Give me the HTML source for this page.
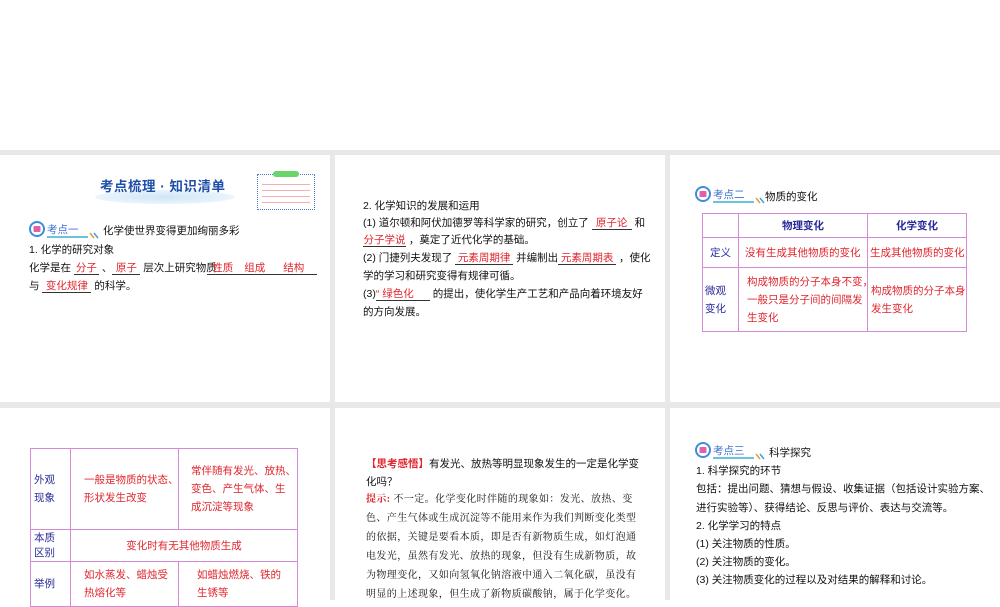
<!DOCTYPE html>
<html><head><meta charset="utf-8"><style>
*{margin:0;padding:0;box-sizing:border-box}
body{width:1000px;height:600px;background:#fff;position:relative;overflow:hidden;font-family:"Liberation Sans","Noto Sans CJK SC",sans-serif;font-size:10.5px;color:#111}
.g{position:absolute;background:#e8e8e8}
.t{position:absolute;white-space:nowrap;line-height:14px}
.r{color:#e0262e}
.b{color:#2a2a9a}
.bl{display:inline-block;border-bottom:1px solid #333;text-align:center;color:#e0262e;line-height:12px}
.icon{position:absolute;width:76px;height:20px}
table{position:absolute;border-collapse:collapse;font-size:10.5px}
td{border:1px solid #d58ad8;line-height:18px;white-space:nowrap}
.serif{font-family:"Liberation Serif","Noto Serif CJK SC",serif}
</style></head><body>
<div class="g" style="left:0;top:150px;width:1000px;height:5px"></div>
<div class="g" style="left:0;top:402px;width:1000px;height:6px"></div>
<div class="g" style="left:330px;top:150px;width:5px;height:450px"></div>
<div class="g" style="left:665px;top:150px;width:5px;height:450px"></div>

<!-- slide 1 -->
<div style="position:absolute;left:95px;top:190px;width:140px;height:14px;background:radial-gradient(ellipse at center,#cfe6f7 0%,#e6f2fb 60%,rgba(255,255,255,0) 100%);border-radius:50%"></div>
<div class="t" style="left:100px;top:179px;font-size:13.5px;font-weight:bold;color:#1f4fa8;line-height:16px;letter-spacing:0.5px">考点梳理 · 知识清单</div>
<div style="position:absolute;left:257px;top:174px;width:58px;height:36px;border:1px dotted #4a7ac8"></div>
<div style="position:absolute;left:273px;top:171px;width:26px;height:6px;background:#6bd46b;border-radius:3px"></div>
<div style="position:absolute;left:262px;top:181px;width:48px;height:24px;background:repeating-linear-gradient(#fff 0 3px,#f4b0b0 3px 4px,#fff 4px 6px)"></div>

<svg class="icon" style="left:28px;top:220px" viewBox="0 0 76 20"><circle cx="9" cy="9" r="7" fill="#fff" stroke="#3a8fd8" stroke-width="2"/><rect x="5.5" y="6" width="7" height="6" rx="1" fill="#e060b0"/><text x="19" y="13" font-size="10.5" fill="#3a6fd0" font-family="Noto Sans CJK SC">考点一</text><line x1="19" y1="17" x2="60" y2="17" stroke="#3ab0d0" stroke-width="1.5"/><line x1="62" y1="13" x2="66" y2="18" stroke="#e0a030" stroke-width="1.5"/><line x1="66" y1="13" x2="70" y2="18" stroke="#40a0e0" stroke-width="1.5"/></svg>
<div class="t" style="left:103px;top:224px">化学使世界变得更加绚丽多彩</div>
<div class="t" style="left:29px;top:243px">1. 化学的研究对象</div>
<div class="t" style="left:29px;top:261px">化学是在 <span class="bl" style="width:25px">分子</span> 、<span class="bl" style="width:28px">原子</span> 层次上研究物质<span class="bl" style="width:32px;margin-left:-10px">性质</span><span class="bl" style="width:32px">组成</span><span class="bl" style="width:46px">结构</span></div>
<div class="t" style="left:29px;top:279px">与 <span class="bl" style="width:49px">变化规律</span> 的科学。</div>

<!-- slide 2 -->
<div class="t" style="left:363px;top:199px">2. 化学知识的发展和运用</div>
<div class="t" style="left:363px;top:216px">(1) 道尔顿和阿伏加德罗等科学家的研究，创立了 <span class="bl" style="width:40px">原子论</span> 和</div>
<div class="t" style="left:363px;top:233px"><span class="bl" style="width:43px">分子学说</span> ，奠定了近代化学的基础。</div>
<div class="t" style="left:363px;top:251px">(2) 门捷列夫发现了 <span class="bl" style="width:58px">元素周期律</span> 并编制出<span class="bl" style="width:58px">元素周期表</span> ，使化</div>
<div class="t" style="left:363px;top:269px">学的学习和研究变得有规律可循。</div>
<div class="t" style="left:363px;top:287px">(3)<span class="bl" style="width:54px;text-align:left">“ 绿色化</span> 的提出，使化学生产工艺和产品向着环境友好</div>
<div class="t" style="left:363px;top:305px">的方向发展。</div>

<!-- slide 3 -->
<svg class="icon" style="left:694px;top:185px" viewBox="0 0 76 20"><circle cx="9" cy="9" r="7" fill="#fff" stroke="#3a8fd8" stroke-width="2"/><rect x="5.5" y="6" width="7" height="6" rx="1" fill="#e060b0"/><text x="19" y="13" font-size="10.5" fill="#3a6fd0" font-family="Noto Sans CJK SC">考点二</text><line x1="19" y1="17" x2="60" y2="17" stroke="#3ab0d0" stroke-width="1.5"/><line x1="62" y1="13" x2="66" y2="18" stroke="#e0a030" stroke-width="1.5"/><line x1="66" y1="13" x2="70" y2="18" stroke="#40a0e0" stroke-width="1.5"/></svg>
<div class="t" style="left:765px;top:190px">物质的变化</div>
<table style="left:702px;top:213px;width:265px;table-layout:fixed">
<tr style="height:24px"><td style="width:36px"></td><td class="b" style="width:129px;text-align:center;font-weight:bold">物理变化</td><td class="b" style="text-align:center;font-weight:bold">化学变化</td></tr>
<tr style="height:30px"><td class="b" style="text-align:center">定义</td><td class="r" style="padding-left:6px">没有生成其他物质的变化</td><td class="r" style="padding-left:2px">生成其他物质的变化</td></tr>
<tr style="height:64px"><td class="b" style="padding-left:2px">微观<br>变化</td><td class="r" style="padding-left:8px">构成物质的分子本身不变，<br>一般只是分子间的间隔发<br>生变化</td><td class="r" style="padding-left:3px">构成物质的分子本身<br>发生变化</td></tr>
</table>

<!-- row 2 slide 1 -->
<table style="left:30px;top:448px;width:268px;table-layout:fixed">
<tr style="height:81px"><td class="b" style="width:40px;padding-left:3px">外观<br>现象</td><td class="r" style="width:108px;padding-left:13px">一般是物质的状态、<br>形状发生改变</td><td class="r" style="padding-left:12px">常伴随有发光、放热、<br>变色、产生气体、生<br>成沉淀等现象</td></tr>
<tr style="height:32px"><td class="b" style="padding-left:3px;line-height:15px">本质<br>区别</td><td colspan="2" class="r" style="text-align:center">变化时有无其他物质生成</td></tr>
<tr style="height:45px"><td class="b" style="padding-left:3px">举例</td><td class="r" style="padding-left:13px">如水蒸发、蜡烛受<br>热熔化等</td><td class="r" style="padding-left:18px">如蜡烛燃烧、铁的<br>生锈等</td></tr>
</table>

<!-- row 2 slide 2 -->
<div class="t" style="left:366px;top:457px"><span class="r" style="font-weight:bold">【思考感悟】</span>有发光、放热等明显现象发生的一定是化学变</div>
<div class="t" style="left:366px;top:475px">化吗？</div>
<div class="t serif" style="left:366px;top:493px;font-size:10px;letter-spacing:0.4px;font-weight:bold"><span class="r">提示:</span> <span style="font-weight:normal">不一定。化学变化时伴随的现象如：发光、放热、变</span></div>
<div class="t serif" style="left:366px;top:512px;font-size:10px;letter-spacing:0.4px">色、产生气体或生成沉淀等不能用来作为我们判断变化类型</div>
<div class="t serif" style="left:366px;top:531px;font-size:10px;letter-spacing:0.4px">的依据，关键是要看本质，即是否有新物质生成，如灯泡通</div>
<div class="t serif" style="left:366px;top:550px;font-size:10px;letter-spacing:0.4px">电发光，虽然有发光、放热的现象，但没有生成新物质，故</div>
<div class="t serif" style="left:366px;top:569px;font-size:10px;letter-spacing:0.4px">为物理变化，又如向氢氧化钠溶液中通入二氧化碳，虽没有</div>
<div class="t serif" style="left:366px;top:588px;font-size:10px;letter-spacing:0.4px">明显的上述现象，但生成了新物质碳酸钠，属于化学变化。</div>

<!-- row 2 slide 3 -->
<svg class="icon" style="left:694px;top:441px" viewBox="0 0 76 20"><circle cx="9" cy="9" r="7" fill="#fff" stroke="#3a8fd8" stroke-width="2"/><rect x="5.5" y="6" width="7" height="6" rx="1" fill="#e060b0"/><text x="19" y="13" font-size="10.5" fill="#3a6fd0" font-family="Noto Sans CJK SC">考点三</text><line x1="19" y1="17" x2="60" y2="17" stroke="#3ab0d0" stroke-width="1.5"/><line x1="62" y1="13" x2="66" y2="18" stroke="#e0a030" stroke-width="1.5"/><line x1="66" y1="13" x2="70" y2="18" stroke="#40a0e0" stroke-width="1.5"/></svg>
<div class="t" style="left:769px;top:446px">科学探究</div>
<div class="t" style="left:696px;top:464px">1. 科学探究的环节</div>
<div class="t" style="left:696px;top:482px">包括：提出问题、猜想与假设、收集证据（包括设计实验方案、</div>
<div class="t" style="left:696px;top:501px">进行实验等）、获得结论、反思与评价、表达与交流等。</div>
<div class="t" style="left:696px;top:519px">2. 化学学习的特点</div>
<div class="t" style="left:696px;top:537px">(1) 关注物质的性质。</div>
<div class="t" style="left:696px;top:555px">(2) 关注物质的变化。</div>
<div class="t" style="left:696px;top:573px">(3) 关注物质变化的过程以及对结果的解释和讨论。</div>
</body></html>
